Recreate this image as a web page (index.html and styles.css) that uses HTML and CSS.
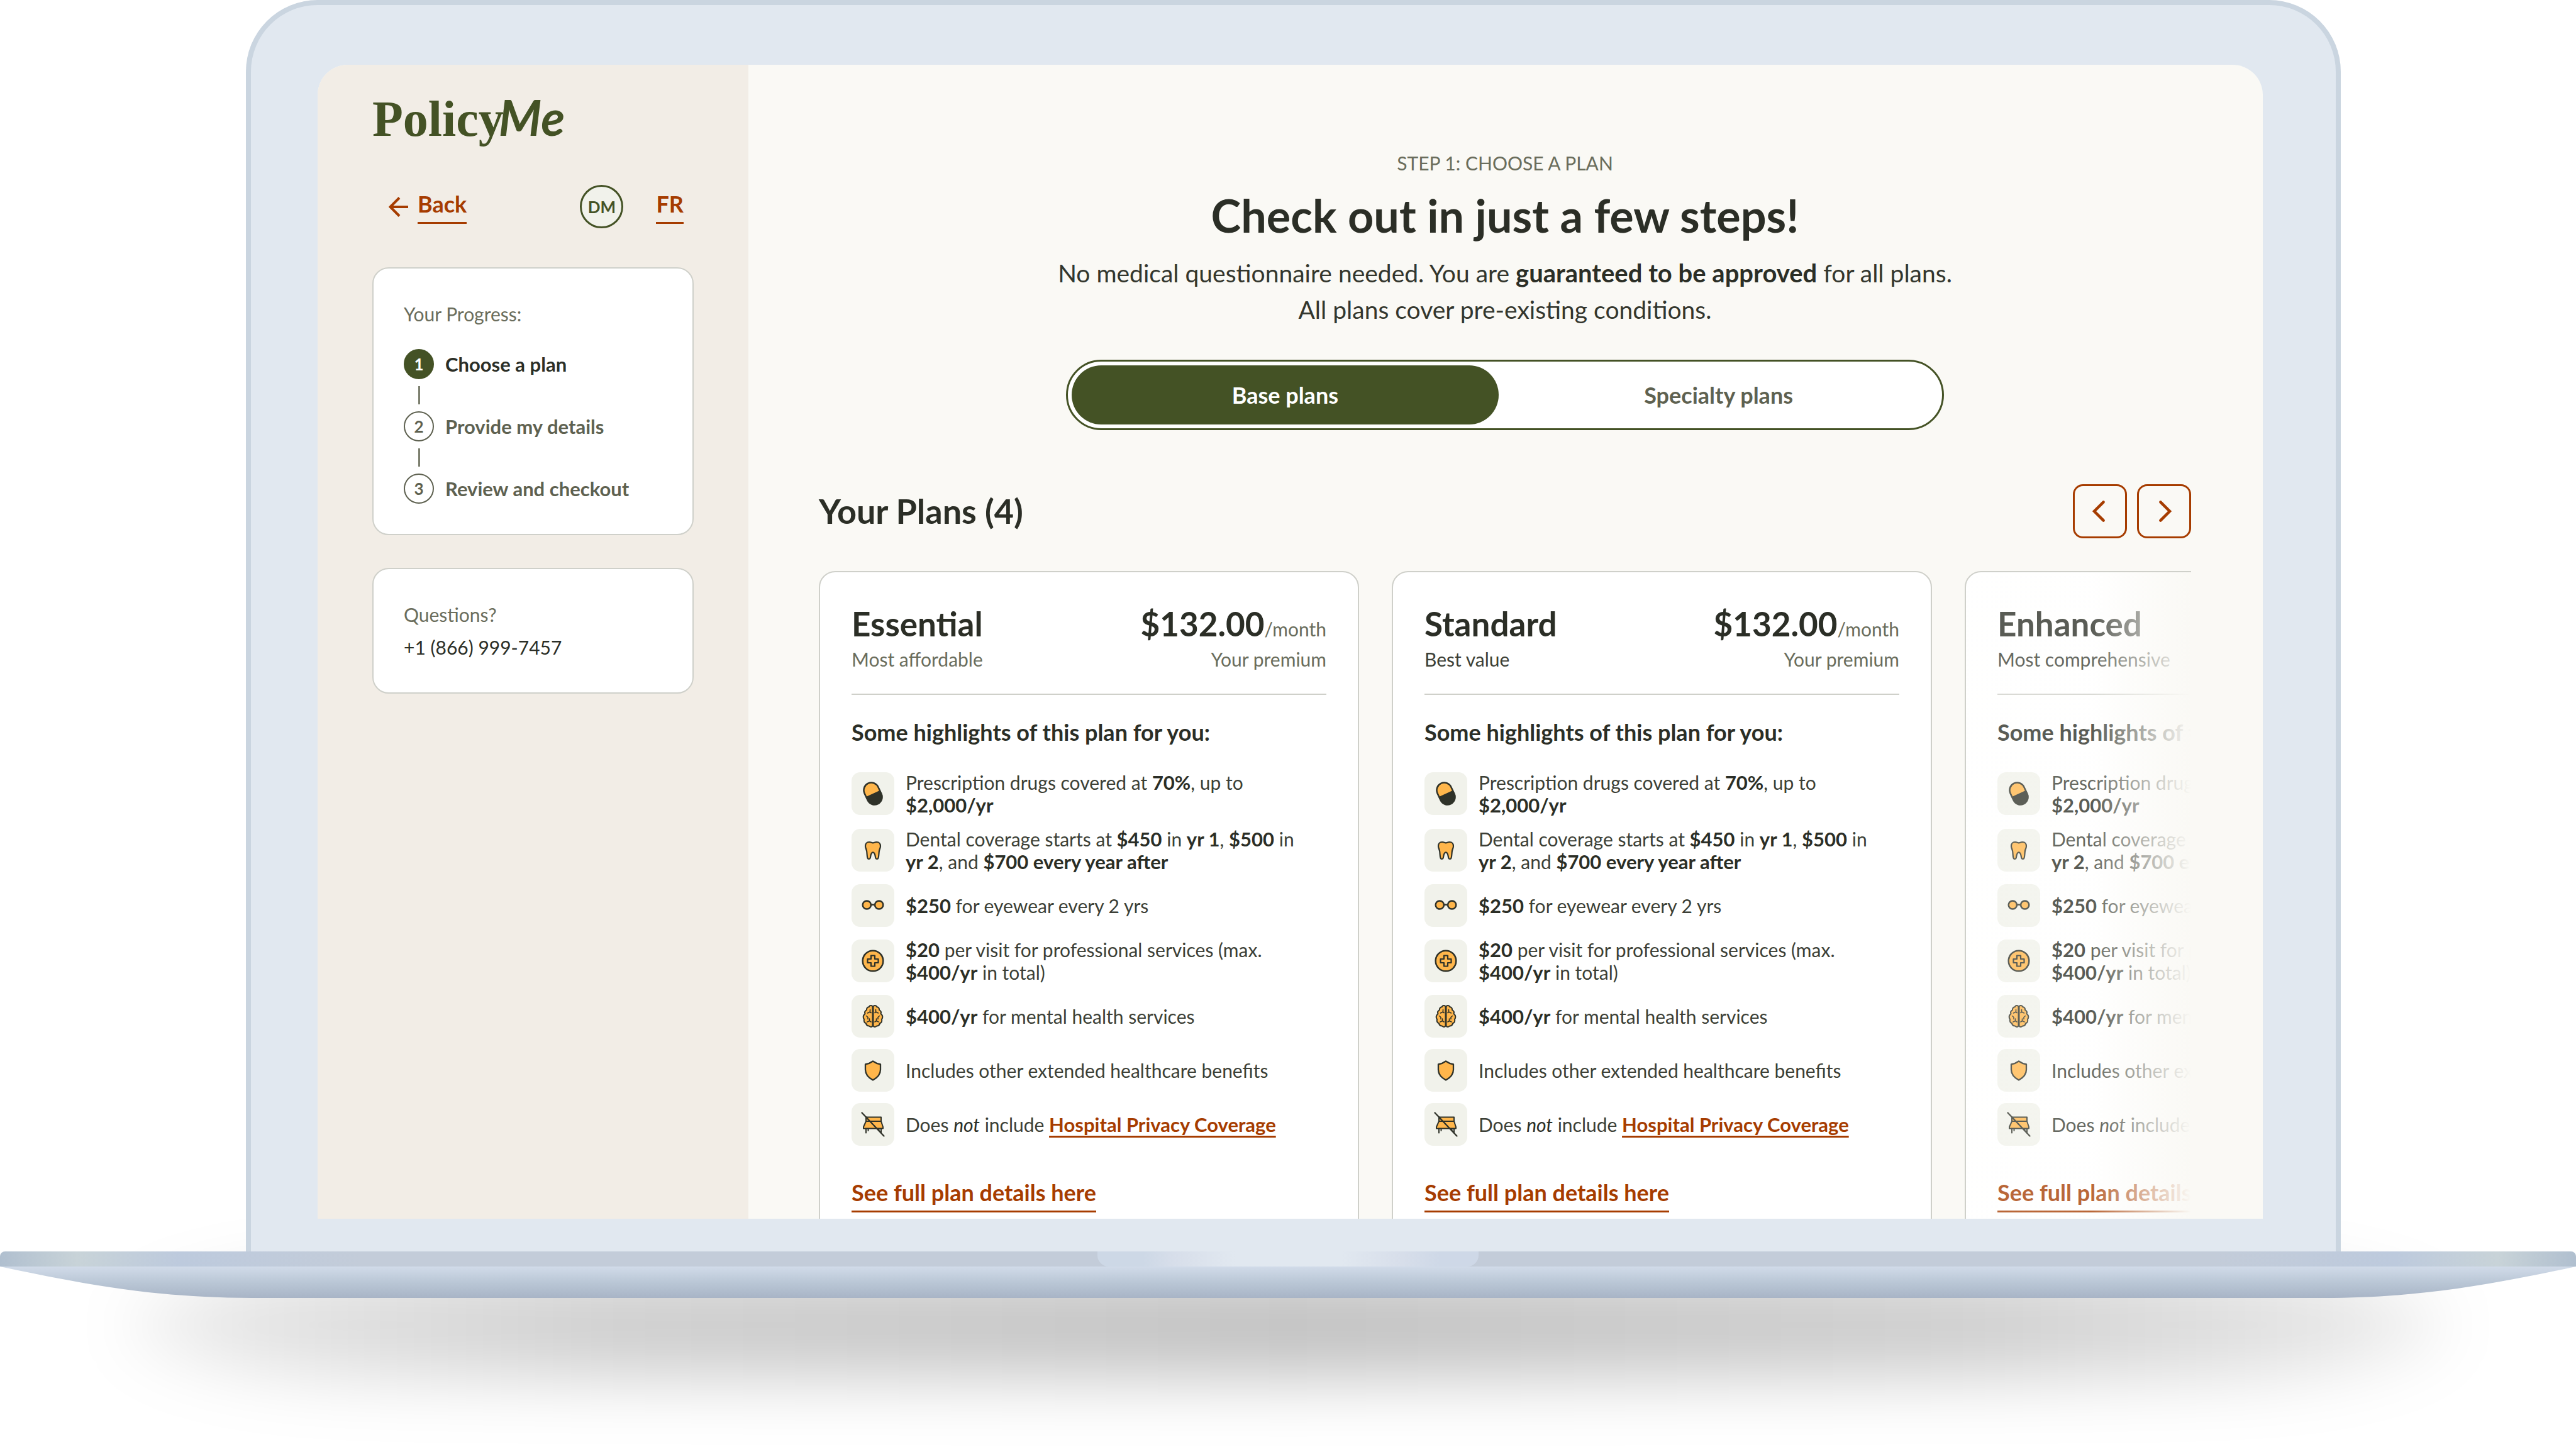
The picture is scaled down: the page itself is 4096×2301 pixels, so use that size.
FILE: index.html
```html
<!DOCTYPE html>
<html lang="en">
<head>
<meta charset="utf-8">
<meta name="viewport" content="width=device-width, initial-scale=1">
<title>PolicyMe – Choose a plan</title>
<link rel="stylesheet" href="styles.css">
</head>
<body>
<svg class="sprite" aria-hidden="true">
  <symbol id="i-pill" viewBox="0 0 40 40">
    <g transform="rotate(-25 20 20)">
      <rect x="8" y="2" width="24" height="36" rx="12" fill="#ffb64b"/>
      <path d="M8 20H32V26a12 12 0 0 1-24 0Z" fill="#2f3229"/>
      <rect x="8" y="2" width="24" height="36" rx="12" fill="none" stroke="#2f3229" stroke-width="2.500"/>
    </g>
  </symbol>
  <symbol id="i-tooth" viewBox="0 0 40 40">
    <path d="M20 8.500c-2-.6-3.600-1.500-6-1.500-4 0-6 3-6 6.500 0 3 1.800 5 2.200 8.500.5 4 .3 7.500 1.300 10.500.7 2 3.800 2 4.300-.2.600-3 .8-9 4.200-9s3.600 6 4.200 9c.5 2.200 3.600 2.200 4.300.2 1-3 .8-6.500 1.300-10.500.4-3.500 2.200-5.500 2.200-8.500 0-3.500-2-6.500-6-6.500-2.400 0-4 .9-6 1.500Z" fill="#ffb64b" stroke="#2f3229" stroke-width="2.200" stroke-linejoin="round"/>
  </symbol>
  <symbol id="i-glasses" viewBox="0 0 40 40">
    <g fill="#ffb64b" stroke="#2f3229" stroke-width="2.500"><path d="M16.500 19q3.500-1 7 0" fill="none"/><circle cx="10.300" cy="19" r="6.600"/><circle cx="29.700" cy="19" r="6.600"/></g>
  </symbol>
  <symbol id="i-care" viewBox="0 0 40 40">
    <circle cx="20" cy="20" r="16.300" fill="#ffb64b" stroke="#2f3229" stroke-width="2.500"/>
    <path d="M17 11.500h6V17h5.500v6H23v5.500h-6V23h-5.500v-6H17Z" fill="#ffb64b" stroke="#2f3229" stroke-width="2.200" stroke-linejoin="round"/>
  </symbol>
  <symbol id="i-brain" viewBox="0 0 40 40">
    <g fill="#ffb64b" stroke="#2f3229" stroke-width="2" stroke-linejoin="round" stroke-linecap="round">
      <path d="M19.500 4.500c-1-2.300-5-2-5.500.5-3 .5-4.500 3-4 5-2.500 1.500-3.500 4-2.500 6-3 2.500-3.500 6-1.500 9-.8 3 .5 5.500 3 6.200.5 2.800 2.500 4.300 5 4.300 1.500 2 4.500 1.800 5.500 0Z"/>
      <path d="M20.500 4.500c1-2.300 5-2 5.500.5 3 .5 4.500 3 4 5 2.500 1.500 3.500 4 2.500 6 3 2.500 3.500 6 1.500 9 .8 3-.5 5.500-3 6.200-.5 2.800-2.500 4.300-5 4.300-1.500 2-4.500 1.800-5.500 0Z"/>
      <path d="M15.500 9.500v3.500l-4 2M15 13l2 1.500M9.500 19.500l2.500 2v3M11 29l3.500-1.500v-3.500M14.500 27.500l2.500 1.500M24.500 9.500v3.500l4 2M25 13l-2 1.500M30.500 19.500l-2.500 2v3M29 29l-3.500-1.500v-3.500M25.500 27.500l-2.500 1.500" fill="none" stroke-width="1.600"/>
    </g>
  </symbol>
  <symbol id="i-shield" viewBox="0 0 40 40">
    <path d="M20 5.500c3.500 2.500 7.500 4.200 12 5V19c0 7.500-4.500 12.500-12 16.500C12.500 31.500 8 26.500 8 19v-8.500C12.500 9.700 16.500 8 20 5.500Z" fill="#ffb64b" stroke="#2f3229" stroke-width="2.300" stroke-linejoin="round"/>
  </symbol>
  <symbol id="i-bed" viewBox="0 0 40 40">
    <g fill="#ffb64b" stroke="#2f3229" stroke-width="2" stroke-linejoin="round" stroke-linecap="round">
      <path d="M9 8.500h24v6.500h-24ZM9 15h24l3 9v2.500h-31V24ZM9 26.500v7M12.500 26.500v3.500M29.500 26.500v3.500M33 26.500v7"/>
      <path d="M2.500 1.500 37.500 38.500" fill="none" stroke-width="2.300"/>
    </g>
  </symbol>
</svg>

<div class="stage">
  <div class="lid">
    <div class="screen">
      <aside class="sidebar">
        <a class="logo" href="#home">Policy<span class="logo-me">Me</span></a>
        <nav class="nav" aria-label="Account">
          <a class="back" href="#back">
            <svg class="arrow" viewBox="0 0 32 32" aria-hidden="true"><path d="M31 16H3M17 1.500 2.500 16 17 30.500" fill="none" stroke="currentColor" stroke-width="4"/></svg>
            <span class="link">Back</span>
          </a>
          <button class="avatar" type="button">DM</button>
          <a class="link" href="#fr">FR</a>
        </nav>
        <section class="panel">
          <p class="muted">Your Progress:</p>
          <ol class="steps">
            <li class="step step-current"><span class="dot">1</span>Choose a plan</li>
            <li class="step"><span class="dot">2</span>Provide my details</li>
            <li class="step"><span class="dot">3</span>Review and checkout</li>
          </ol>
        </section>
        <section class="panel panel-help">
          <p class="muted">Questions?</p>
          <a class="phone" href="tel:+18669997457">+1 (866) 999-7457</a>
        </section>
      </aside>

      <main class="main">
        <header class="intro">
          <p class="eyebrow">STEP 1: CHOOSE A PLAN</p>
          <h1>Check out in just a few steps!</h1>
          <p class="lead">No medical questionnaire needed. You are <strong>guaranteed to be approved</strong> for all plans.<br>All plans cover pre-existing conditions.</p>
        </header>
        <div class="toggle" role="tablist">
          <button class="tab tab-on" type="button" role="tab" aria-selected="true">Base plans</button>
          <button class="tab" type="button" role="tab" aria-selected="false">Specialty plans</button>
        </div>
        <div class="bar">
          <h2>Your Plans (4)</h2>
          <div class="pager">
            <button class="page" type="button" aria-label="Previous plan"><svg viewBox="0 0 32 32" aria-hidden="true"><path d="M21 3 8 16l13 13" fill="none" stroke="currentColor" stroke-width="4" stroke-linecap="round"/></svg></button>
            <button class="page" type="button" aria-label="Next plan"><svg viewBox="0 0 32 32" aria-hidden="true"><path d="M11 3l13 13L11 29" fill="none" stroke="currentColor" stroke-width="4" stroke-linecap="round"/></svg></button>
          </div>
        </div>
        <div class="plans">
          <article class="plan">
            <header class="plan-head">
              <div><h3>Essential</h3><p class="tag muted">Most affordable</p></div>
              <div class="cost"><p class="price">$132.00<span class="per">/month</span></p><p class="tag muted">Your premium</p></div>
            </header>
            <h4>Some highlights of this plan for you:</h4>
            <ul class="perks">
              <li><span class="tile"><svg><use href="#i-pill"/></svg></span><p>Prescription drugs covered at <b>70%</b>, up to<br><b>$2,000/yr</b></p></li>
              <li><span class="tile"><svg><use href="#i-tooth"/></svg></span><p>Dental coverage starts at <b>$450</b> in <b>yr 1</b>, <b>$500</b> in<br><b>yr 2</b>, and <b>$700 every year after</b></p></li>
              <li><span class="tile"><svg><use href="#i-glasses"/></svg></span><p><b>$250</b> for eyewear every 2 yrs</p></li>
              <li><span class="tile"><svg><use href="#i-care"/></svg></span><p><b>$20</b> per visit for professional services (max.<br><b>$400/yr</b> in total)</p></li>
              <li><span class="tile"><svg><use href="#i-brain"/></svg></span><p><b>$400/yr</b> for mental health services</p></li>
              <li><span class="tile"><svg><use href="#i-shield"/></svg></span><p>Includes other extended healthcare benefits</p></li>
              <li><span class="tile"><svg><use href="#i-bed"/></svg></span><p>Does <em>not</em> include <a class="inline-link" href="#hospital">Hospital Privacy Coverage</a></p></li>
            </ul>
            <a class="link" href="#essential">See full plan details here</a>
          </article>

          <article class="plan">
            <header class="plan-head">
              <div><h3>Standard</h3><p class="tag">Best value</p></div>
              <div class="cost"><p class="price">$132.00<span class="per">/month</span></p><p class="tag muted">Your premium</p></div>
            </header>
            <h4>Some highlights of this plan for you:</h4>
            <ul class="perks">
              <li><span class="tile"><svg><use href="#i-pill"/></svg></span><p>Prescription drugs covered at <b>70%</b>, up to<br><b>$2,000/yr</b></p></li>
              <li><span class="tile"><svg><use href="#i-tooth"/></svg></span><p>Dental coverage starts at <b>$450</b> in <b>yr 1</b>, <b>$500</b> in<br><b>yr 2</b>, and <b>$700 every year after</b></p></li>
              <li><span class="tile"><svg><use href="#i-glasses"/></svg></span><p><b>$250</b> for eyewear every 2 yrs</p></li>
              <li><span class="tile"><svg><use href="#i-care"/></svg></span><p><b>$20</b> per visit for professional services (max.<br><b>$400/yr</b> in total)</p></li>
              <li><span class="tile"><svg><use href="#i-brain"/></svg></span><p><b>$400/yr</b> for mental health services</p></li>
              <li><span class="tile"><svg><use href="#i-shield"/></svg></span><p>Includes other extended healthcare benefits</p></li>
              <li><span class="tile"><svg><use href="#i-bed"/></svg></span><p>Does <em>not</em> include <a class="inline-link" href="#hospital">Hospital Privacy Coverage</a></p></li>
            </ul>
            <a class="link" href="#standard">See full plan details here</a>
          </article>

          <article class="plan plan-peek">
            <header class="plan-head">
              <div><h3>Enhanced</h3><p class="tag">Most comprehensive</p></div>
            </header>
            <h4>Some highlights of this plan for you:</h4>
            <ul class="perks">
              <li><span class="tile"><svg><use href="#i-pill"/></svg></span><p>Prescription drugs covered at <b>70%</b>, up to<br><b>$2,000/yr</b></p></li>
              <li><span class="tile"><svg><use href="#i-tooth"/></svg></span><p>Dental coverage starts at <b>$450</b> in <b>yr 1</b>, <b>$500</b> in<br><b>yr 2</b>, and <b>$700 every year after</b></p></li>
              <li><span class="tile"><svg><use href="#i-glasses"/></svg></span><p><b>$250</b> for eyewear every 2 yrs</p></li>
              <li><span class="tile"><svg><use href="#i-care"/></svg></span><p><b>$20</b> per visit for professional services (max.<br><b>$400/yr</b> in total)</p></li>
              <li><span class="tile"><svg><use href="#i-brain"/></svg></span><p><b>$400/yr</b> for mental health services</p></li>
              <li><span class="tile"><svg><use href="#i-shield"/></svg></span><p>Includes other extended healthcare benefits</p></li>
              <li><span class="tile"><svg><use href="#i-bed"/></svg></span><p>Does <em>not</em> include <a class="inline-link" href="#hospital">Hospital Privacy Coverage</a></p></li>
            </ul>
            <a class="link" href="#enhanced">See full plan details here</a>
          </article>
        </div>
      </main>
    </div>
  </div>
  <div class="deck"><div class="notch"></div></div>
  <svg class="underside" viewBox="0 0 4096 50" preserveAspectRatio="none" aria-hidden="true">
    <defs><linearGradient id="metal" x1="0" y1="0" x2="0" y2="1"><stop offset="0" stop-color="#d1dbe9"/><stop offset=".5" stop-color="#bac7d6"/><stop offset="1" stop-color="#a8b4c6"/></linearGradient></defs>
    <path d="M0 0C150 32 260 50 400 50H3696C3836 50 3946 32 4096 0Z" fill="url(#metal)"/>
  </svg>
  <div class="floor"></div>
</div>
</body>
</html>
```

FILE: styles.css
```css
:root {
  --ink: #2b2e26;
  --text: #3c3f36;
  --muted: #6a6d5c;
  --green: #445225;
  --rust: #a63c00;
  --line: #cfd0ca;
  --cream: #faf9f5;
  --bezel: #e1e8f0;
}

* { box-sizing: border-box; margin: 0; padding: 0; }

body {
  background: #fff;
  color: var(--text);
  font: 400 30px/36px Lato, "Liberation Sans", sans-serif;
}

button { background: none; border: 0; color: inherit; font: inherit; cursor: pointer; }
a { color: inherit; text-decoration: none; }
ol, ul { list-style: none; }
b, strong { color: var(--ink); font-weight: 700; }
.sprite { position: absolute; width: 0; height: 0; }
.muted { color: var(--muted); }

/* Laptop */
.stage {
  display: flex;
  flex-direction: column;
  height: 100vh;
  overflow: hidden;
  isolation: isolate;
}
.lid {
  display: flex;
  flex: 1;
  min-height: 0;
  margin: 0 374px 0 391px;
  padding: 95px 116px 52px 106px;
  border: 8px solid #cad5e0;
  border-bottom: 0;
  border-radius: 114px 114px 0 0;
  background: var(--bezel);
}
.deck {
  display: flex;
  justify-content: center;
  flex: none;
  height: 24px;
  border-radius: 8px 8px 0 0;
  background: linear-gradient(90deg, #b0bfcf, #c8d3d8 3%, #bdcadd 7%, #c3ccd9 14%, #c3ccd9 86%, #bdcadd 93%, #c8d3d8 97%, #b0bfcf);
}
.notch {
  width: 606px;
  border-radius: 0 0 18px 18px;
  background: linear-gradient(90deg, #cdd8e6, #cdd8e6 12%, #d7deea 20%, var(--bezel) 36%, var(--bezel) 64%, #d7deea 80%, #ced8e7 90%, #ced8e7);
}
.underside { display: block; flex: none; width: 100%; height: 50px; }
.floor { position: relative; flex: none; height: 237px; z-index: -1; }
.floor::before {
  content: "";
  position: absolute;
  top: -43px;
  right: 200px;
  left: 200px;
  height: 172px;
  border-radius: 400px / 86px;
  background: linear-gradient(90deg, rgba(0,0,0,.05), rgba(0,0,0,.1) 5%, rgba(0,0,0,.14) 12%, rgba(0,0,0,.19) 21%, rgba(0,0,0,.24) 50%, rgba(0,0,0,.19) 79%, rgba(0,0,0,.14) 88%, rgba(0,0,0,.1) 95%, rgba(0,0,0,.05));
  filter: blur(50px);
}
.screen {
  display: flex;
  flex: 1;
  min-width: 0;
  overflow: hidden;
  border-radius: 48px 48px 0 0;
  background: var(--cream);
}

/* Sidebar */
.sidebar {
  flex: none;
  width: 685px;
  padding: 42px 87px;
  background: #f2ede6;
}
.logo {
  display: block;
  height: 82px;
  color: var(--green);
  font: 700 80px/82px "Liberation Serif", serif;
}
.logo-me { margin-left: -8px; font: italic 700 78px/82px Lato, sans-serif; }
.nav {
  display: flex;
  align-items: center;
  gap: 52px;
  margin: 67px 0 62px;
  padding: 0 16px 0 26px;
}
.back {
  display: flex;
  align-items: center;
  gap: 14px;
  margin-right: auto;
  color: var(--rust);
}
.arrow { width: 32px; height: 32px; }
.link {
  display: inline-block;
  padding-bottom: 7px;
  border-bottom: 3px solid var(--rust);
  color: var(--rust);
  font-size: 36px;
  font-weight: 700;
  line-height: 44px;
}
.avatar {
  width: 69px;
  height: 69px;
  border: 3px solid var(--green);
  border-radius: 50%;
  background: #f1f2eb;
  color: var(--green);
  font-size: 26px;
  font-weight: 700;
}
.panel {
  padding: 54px 48px 48px;
  border: 2px solid var(--line);
  border-radius: 26px;
  background: #fff;
}
.panel-help { margin-top: 52px; padding-bottom: 54px; }
.phone { display: block; margin-top: 16px; color: var(--ink); }
.steps { margin-top: 38px; }
.step {
  display: grid;
  grid-template-columns: 48px 1fr;
  column-gap: 18px;
  align-items: center;
  color: #5e6150;
  font-size: 31px;
  font-weight: 700;
}
.step:not(:last-child)::after {
  content: "";
  width: 3px;
  height: 29px;
  margin: 11px auto;
  background: #7c7f6f;
}
.dot {
  display: grid;
  place-items: center;
  height: 48px;
  border: 2px solid #5e6150;
  border-radius: 50%;
  font-size: 26px;
}
.step-current { color: var(--ink); }
.step-current .dot { border-color: var(--green); background: var(--green); color: #fff; }

/* Main column */
.main {
  flex: 1;
  min-width: 0;
  padding: 138px 114px 0 112px;
}
.intro { text-align: center; }
.eyebrow { color: var(--muted); }
h1 { margin: 22px 0 20px; color: var(--ink); font-size: 72px; line-height: 86px; }
.lead { color: #33362d; font-size: 39px; line-height: 58px; }
.lead strong { font-size: 40px; }
.toggle {
  display: grid;
  grid-template-columns: 68fr 70fr;
  width: 64%;
  height: 112px;
  margin: 51px auto 86px;
  padding: 6px;
  border: 3px solid var(--green);
  border-radius: 56px;
  background: #fff;
}
.tab { border-radius: 48px; color: #5e6150; font-size: 36px; font-weight: 700; }
.tab-on { background: var(--green); color: #fff; }
.bar {
  display: flex;
  align-items: center;
  justify-content: space-between;
  margin-bottom: 52px;
}
h2 { color: var(--ink); font-size: 54px; line-height: 66px; }
.pager { display: flex; gap: 16px; }
.page {
  display: grid;
  place-items: center;
  width: 86px;
  height: 86px;
  border: 3px solid var(--rust);
  border-radius: 16px;
  color: var(--rust);
}
.page svg { width: 36px; height: 36px; }

/* Plan carousel */
.plans {
  display: grid;
  grid-auto-flow: column;
  grid-auto-columns: calc((100% - 464px) / 2);
  gap: 52px;
  overflow: hidden;
}
.plan {
  position: relative;
  padding: 52px 50px 50px;
  border: 2px solid var(--line);
  border-radius: 26px;
  background: #fff;
}
.plan-head {
  display: flex;
  justify-content: space-between;
  padding-bottom: 37px;
  border-bottom: 2px solid var(--line);
}
h3, .price { color: var(--ink); font-size: 53px; font-weight: 700; line-height: 60px; }
.per { color: var(--muted); font-size: 30px; font-weight: 400; line-height: 36px; }
.tag { margin-top: 8px; }
.cost { text-align: right; }
h4 { margin: 37px 0 40px; color: var(--ink); font-size: 36px; line-height: 44px; }
.perks { display: grid; gap: 18px; margin-bottom: 52px; }
.perks li { display: flex; align-items: center; gap: 18px; white-space: nowrap; }
.tile {
  display: grid;
  flex: none;
  place-items: center;
  width: 68px;
  height: 68px;
  border-radius: 14px;
  background: #f1f2eb;
}
.tile svg { width: 40px; height: 40px; }
.perks b { font-size: 31px; }
.perks em { color: var(--ink); }
.inline-link {
  color: var(--rust);
  font-size: 31px;
  font-weight: 700;
  text-decoration: underline 3px;
  text-underline-offset: 6px;
  text-decoration-skip-ink: none;
}
.plan-peek::after {
  content: "";
  position: absolute;
  inset: 0;
  border-radius: 24px;
  background: linear-gradient(90deg, rgba(254,254,252,.22) 200px, #faf9f5 358px);
}
```
